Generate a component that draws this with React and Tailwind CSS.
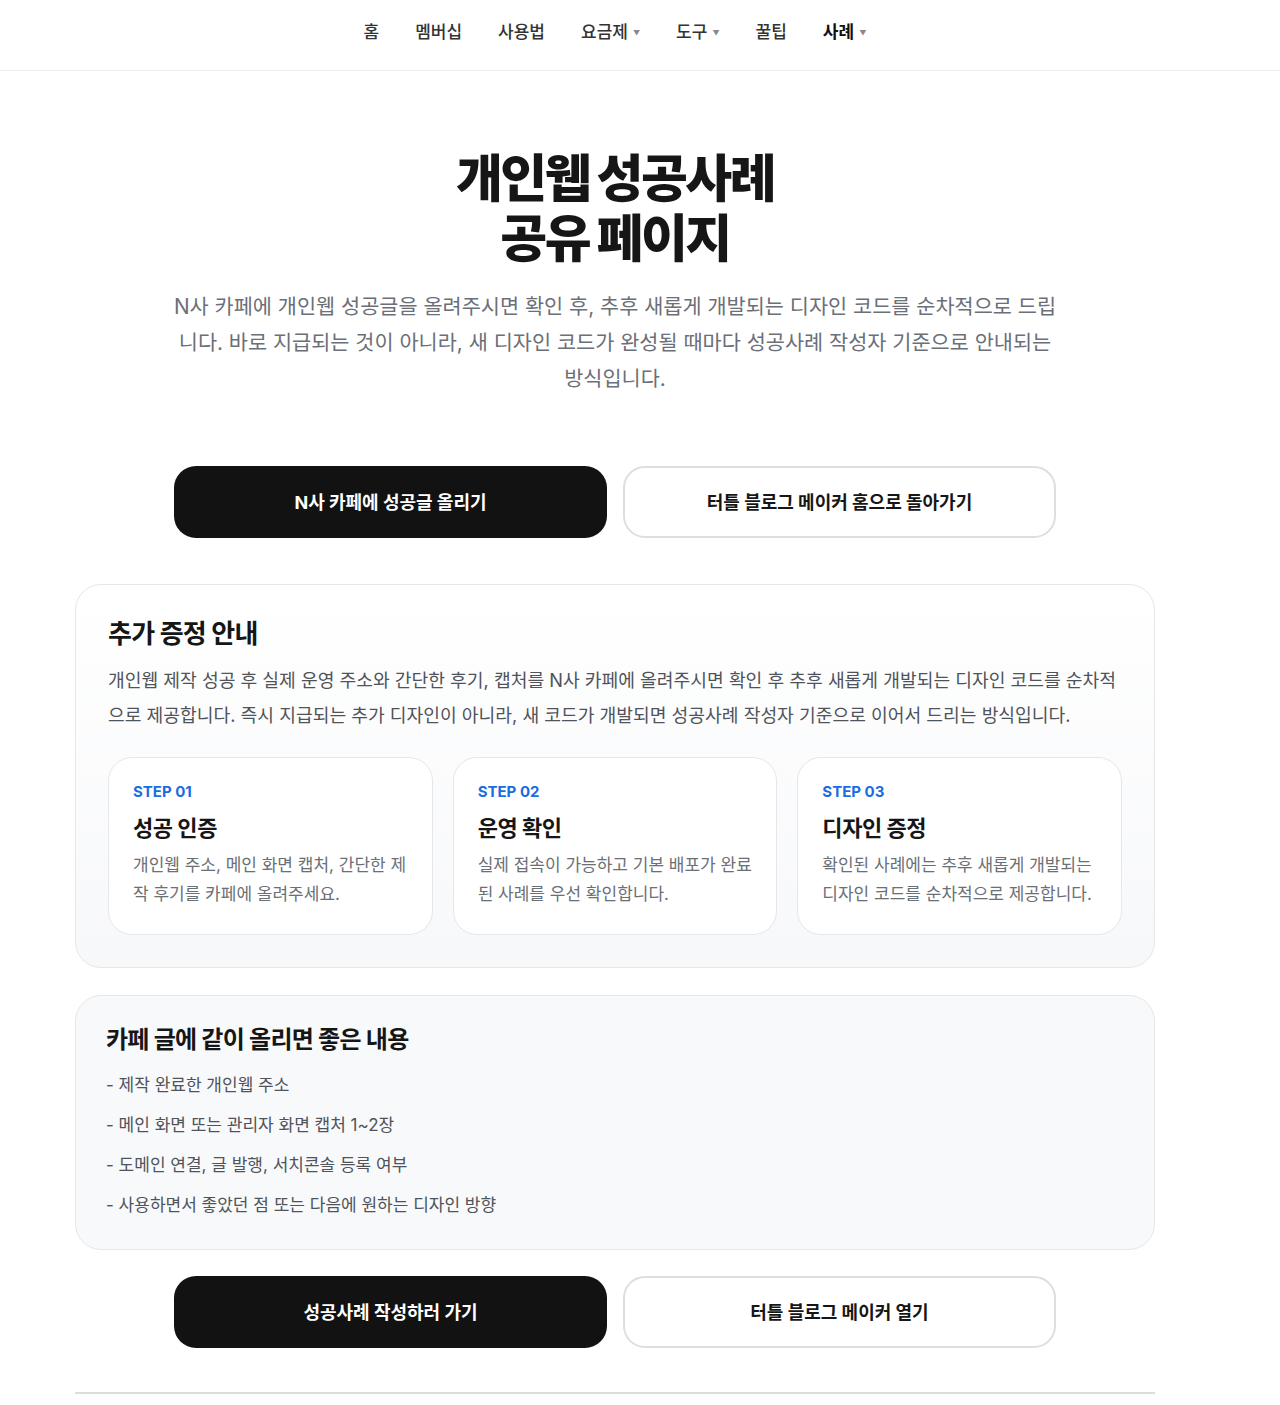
import React from "react";

const font = { fontFamily: 'Inter, "Noto Sans CJK KR", "Noto Sans", sans-serif' };

function NavItem({ label, arrow, active }) {
  return (
    <div className={`flex items-center text-[17px] ${active ? "font-bold text-[#111]" : "font-medium text-[#333]"}`}>
      <span>{label}</span>
      {arrow && <span className="ml-[5px] mt-[3px] text-[7px] text-[#888]">▼</span>}
    </div>
  );
}

function Step({ step, title, lines }) {
  return (
    <div className="flex-1 rounded-[24px] border border-[#e6e7ea] bg-white pl-[24px] pr-[20px] pt-[24px] pb-[25px]">
      <div className="text-[15px] leading-[20px] font-bold text-[#1a6ce0]">{step}</div>
      <div className="mt-[11px] text-[22px] leading-[30px] font-bold tracking-[-0.02em] text-[#161616]">{title}</div>
      <div className="mt-[8px] text-[17px] leading-[29px] text-[#6b6f76]">
        {lines.map((l, i) => (
          <div key={i}>{l}</div>
        ))}
      </div>
    </div>
  );
}

function Buttons({ a, b }) {
  return (
    <div className="flex justify-center gap-[16px]">
      <button className="flex h-[72px] w-[433px] items-center justify-center rounded-[22px] bg-[#121212] text-[18px] font-bold text-white">
        {a}
      </button>
      <button className="flex h-[72px] w-[433px] items-center justify-center rounded-[22px] border-2 border-[#dedede] bg-white text-[18px] font-bold text-[#161616]">
        {b}
      </button>
    </div>
  );
}

export default function App() {
  return (
    <div className="min-h-[1405px] bg-white" style={font}>
      <nav className="h-[71px] border-b border-[#ededed]">
        <div className="flex h-[70px] w-[1230px] items-center justify-center gap-[36px] pb-[5px]">
          <NavItem label="홈" />
          <NavItem label="멤버십" />
          <NavItem label="사용법" />
          <NavItem label="요금제" arrow />
          <NavItem label="도구" arrow />
          <NavItem label="꿀팁" />
          <NavItem label="사례" arrow active />
        </div>
      </nav>

      <div className="w-[1230px]">
        <div className="mx-auto w-[1080px]">
          <h1 className="mt-[78px] text-center text-[51px] leading-[60px] font-black tracking-[-0.05em] text-[#161616]">
            개인웹 성공사례
            <br />
            공유 페이지
          </h1>
          <p className="mx-auto mt-[20px] text-center text-[20.8px] leading-[36px] text-[#6b6f78]">
            N사 카페에 개인웹 성공글을 올려주시면 확인 후, 추후 새롭게 개발되는 디자인 코드를 순차적으로 드립
            <br />
            니다. 바로 지급되는 것이 아니라, 새 디자인 코드가 완성될 때마다 성공사례 작성자 기준으로 안내되는
            <br />
            방식입니다.
          </p>

          <div className="mt-[69px]">
            <Buttons a="N사 카페에 성공글 올리기" b="터틀 블로그 메이커 홈으로 돌아가기" />
          </div>

          <section className="mt-[46px] rounded-[26px] border border-[#e6e7ea] bg-gradient-to-b from-white to-[#f7f8fa] px-[32px] pt-[32px] pb-[32px]">
            <h2 className="text-[26px] leading-[34px] font-bold tracking-[-0.03em] text-[#161616]">추가 증정 안내</h2>
            <p className="mt-[12px] text-[18.2px] leading-[35px] text-[#4f535a]">
              개인웹 제작 성공 후 실제 운영 주소와 간단한 후기, 캡처를 N사 카페에 올려주시면 확인 후 추후 새롭게 개발되는 디자인 코드를 순차적
              <br />
              으로 제공합니다. 즉시 지급되는 추가 디자인이 아니라, 새 코드가 개발되면 성공사례 작성자 기준으로 이어서 드리는 방식입니다.
            </p>
            <div className="mt-[24px] flex gap-[20px]">
              <Step step="STEP 01" title="성공 인증" lines={["개인웹 주소, 메인 화면 캡처, 간단한 제", "작 후기를 카페에 올려주세요."]} />
              <Step step="STEP 02" title="운영 확인" lines={["실제 접속이 가능하고 기본 배포가 완료", "된 사례를 우선 확인합니다."]} />
              <Step step="STEP 03" title="디자인 증정" lines={["확인된 사례에는 추후 새롭게 개발되는", "디자인 코드를 순차적으로 제공합니다."]} />
            </div>
          </section>

          <section className="mt-[27px] rounded-[26px] border border-[#e6e7ea] bg-[#f8f9fb] px-[30px] pt-[28px] pb-[24px]">
            <h2 className="text-[24px] leading-[32px] font-bold tracking-[-0.03em] text-[#161616]">카페 글에 같이 올리면 좋은 내용</h2>
            <ul className="mt-[9px] text-[17px] leading-[40px] text-[#4f535a]">
              <li>- 제작 완료한 개인웹 주소</li>
              <li>- 메인 화면 또는 관리자 화면 캡처 1~2장</li>
              <li>- 도메인 연결, 글 발행, 서치콘솔 등록 여부</li>
              <li>- 사용하면서 좋았던 점 또는 다음에 원하는 디자인 방향</li>
            </ul>
          </section>

          <div className="mt-[26px]">
            <Buttons a="성공사례 작성하러 가기" b="터틀 블로그 메이커 열기" />
          </div>

          <div className="mt-[44px] h-[2px] bg-[#dcdcdc]" />
        </div>
      </div>
    </div>
  );
}
